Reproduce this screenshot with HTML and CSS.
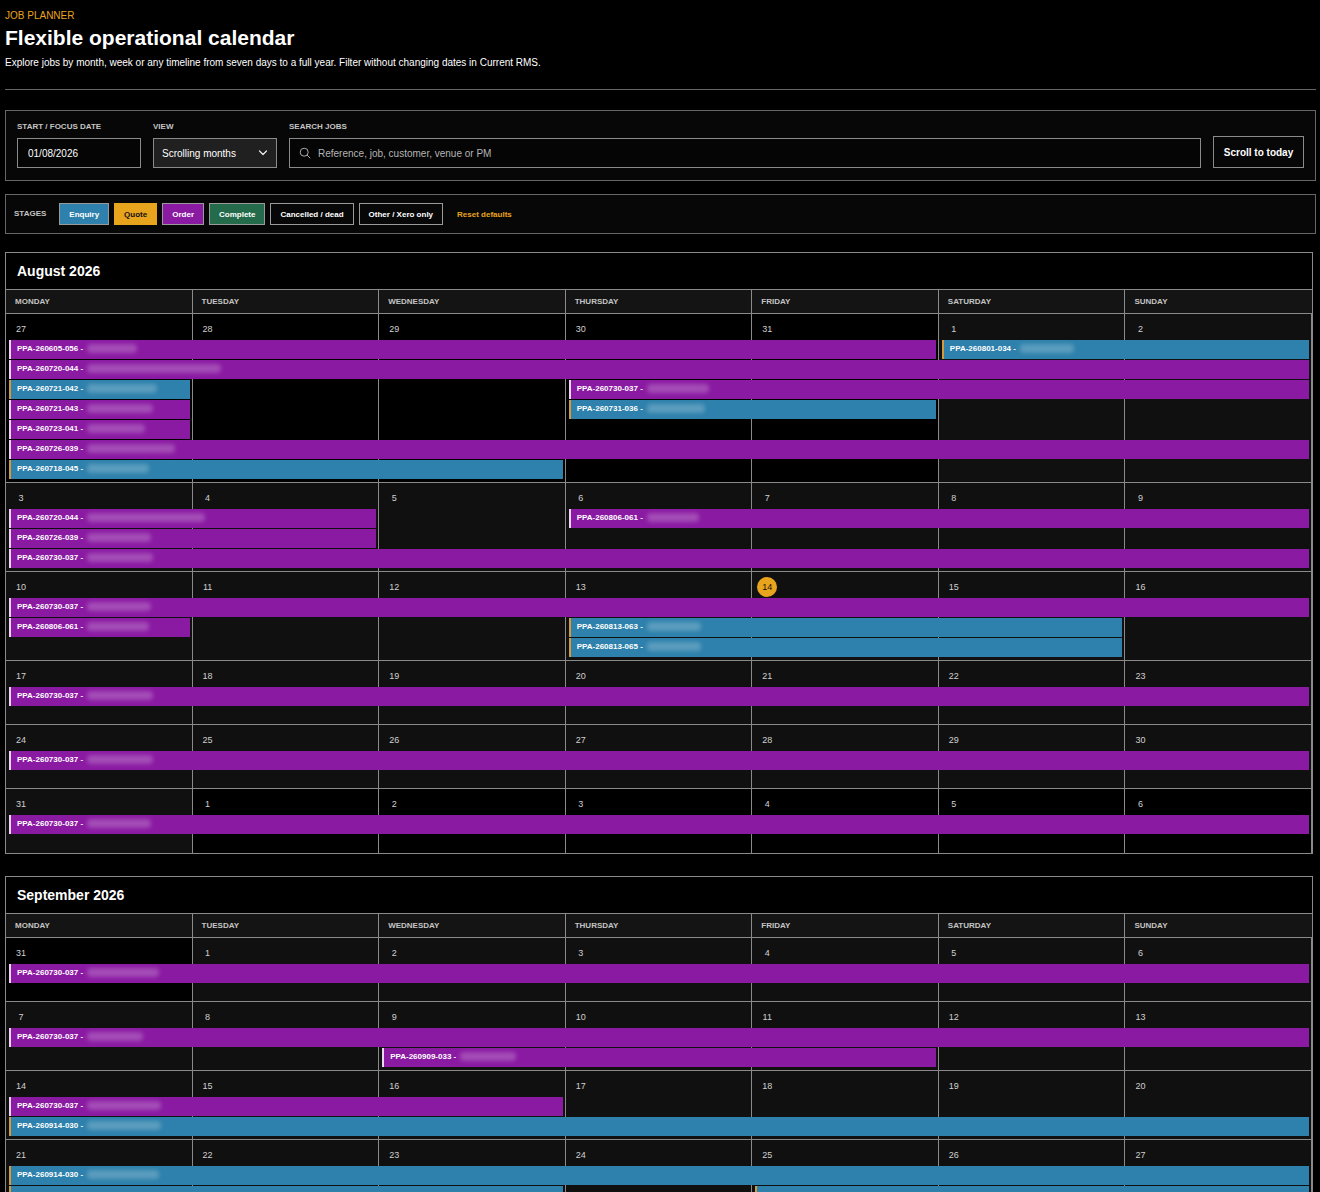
FILE: index.html
```
<!DOCTYPE html>
<html lang="en-GB">
<head>
    <meta charset="UTF-8">
    <meta name="viewport" content="width=device-width, initial-scale=1.0">
    <title>Job Planner</title>
    <link rel="stylesheet" href="styles.css">
</head>
<body>
    <header class="page-header">
        <p class="eyebrow">JOB PLANNER</p>
        <h1>Flexible operational calendar</h1>
        <p class="intro">Explore jobs by month, week or any timeline from seven days to a full year. Filter without changing dates in Current RMS.</p>
    </header>

    <!-- Date, view and search -->
    <form class="panel controls">
        <div class="field">
            <label for="focus-date">START / FOCUS DATE</label>
            <input class="control" type="text" id="focus-date" value="01/08/2026">
        </div>
        <div class="field">
            <label for="view">VIEW</label>
            <div class="select-wrap">
                <select class="control" id="view">
                    <option>Scrolling months</option>
                </select>
                <svg class="chevron" width="10" height="6" viewBox="0 0 10 6" aria-hidden="true">
                    <path d="M1.5 1 L5 4.5 L8.5 1" fill="none" stroke="#eee" stroke-width="1.2" stroke-linecap="round" stroke-linejoin="round"/>
                </svg>
            </div>
        </div>
        <div class="field">
            <label for="search">SEARCH JOBS</label>
            <div class="control search-box">
                <svg width="12" height="12" viewBox="0 0 12 12" aria-hidden="true">
                    <circle cx="5.2" cy="5.2" r="4" fill="none" stroke="#aaa" stroke-width="1"/>
                    <path d="M8.2 8.2 L11 11" stroke="#aaa" stroke-width="1" stroke-linecap="round"/>
                </svg>
                <input type="text" id="search" placeholder="Reference, job, customer, venue or PM">
            </div>
        </div>
        <button type="button" class="today-button">Scroll to today</button>
    </form>

    <!-- Stage filters -->
    <div class="panel stages">
        <span class="stages-label">STAGES</span>
        <button type="button" class="stage enquiry">Enquiry</button>
        <button type="button" class="stage quote">Quote</button>
        <button type="button" class="stage order">Order</button>
        <button type="button" class="stage complete">Complete</button>
        <button type="button" class="stage">Cancelled / dead</button>
        <button type="button" class="stage">Other / Xero only</button>
        <button type="button" class="reset">Reset defaults</button>
    </div>

    <main id="calendar"></main>

    <script>
        const dayNames = ['MONDAY', 'TUESDAY', 'WEDNESDAY', 'THURSDAY', 'FRIDAY', 'SATURDAY', 'SUNDAY'];

        // job: [stage, reference, first day column, last day column, lane, width of the hidden name]
        const months = [
            {
                title: 'August 2026',
                weeks: [
                    { days: [27, 28, 29, 30, 31, 1, 2], outside: [0, 1, 2, 3, 4], lanes: 7, jobs: [
                        ['order', 'PPA-260605-056', 1, 5, 1, 50],
                        ['enquiry', 'PPA-260801-034', 6, 7, 1, 54],
                        ['order', 'PPA-260720-044', 1, 7, 2, 134],
                        ['enquiry', 'PPA-260721-042', 1, 1, 3, 70],
                        ['order', 'PPA-260730-037', 4, 7, 3, 62],
                        ['order', 'PPA-260721-043', 1, 1, 4, 66],
                        ['enquiry', 'PPA-260731-036', 4, 5, 4, 58],
                        ['order', 'PPA-260723-041', 1, 1, 5, 58],
                        ['order', 'PPA-260726-039', 1, 7, 6, 88],
                        ['enquiry', 'PPA-260718-045', 1, 3, 7, 62]
                    ] },
                    { days: [3, 4, 5, 6, 7, 8, 9], outside: [], lanes: 3, jobs: [
                        ['order', 'PPA-260720-044', 1, 2, 1, 118],
                        ['order', 'PPA-260806-061', 4, 7, 1, 52],
                        ['order', 'PPA-260726-039', 1, 2, 2, 64],
                        ['order', 'PPA-260730-037', 1, 7, 3, 66]
                    ] },
                    { days: [10, 11, 12, 13, 14, 15, 16], outside: [], lanes: 3, today: 14, jobs: [
                        ['order', 'PPA-260730-037', 1, 7, 1, 64],
                        ['order', 'PPA-260806-061', 1, 1, 2, 62],
                        ['enquiry', 'PPA-260813-063', 4, 6, 2, 54],
                        ['enquiry', 'PPA-260813-065', 4, 6, 3, 54]
                    ] },
                    { days: [17, 18, 19, 20, 21, 22, 23], outside: [], lanes: 1, jobs: [
                        ['order', 'PPA-260730-037', 1, 7, 1, 66]
                    ] },
                    { days: [24, 25, 26, 27, 28, 29, 30], outside: [], lanes: 1, jobs: [
                        ['order', 'PPA-260730-037', 1, 7, 1, 66]
                    ] },
                    { days: [31, 1, 2, 3, 4, 5, 6], outside: [1, 2, 3, 4, 5, 6], lanes: 1, jobs: [
                        ['order', 'PPA-260730-037', 1, 7, 1, 64]
                    ] }
                ]
            },
            {
                title: 'September 2026',
                weeks: [
                    { days: [31, 1, 2, 3, 4, 5, 6], outside: [0], lanes: 1, jobs: [
                        ['order', 'PPA-260730-037', 1, 7, 1, 72]
                    ] },
                    { days: [7, 8, 9, 10, 11, 12, 13], outside: [], lanes: 2, jobs: [
                        ['order', 'PPA-260730-037', 1, 7, 1, 56],
                        ['order', 'PPA-260909-033', 3, 5, 2, 56]
                    ] },
                    { days: [14, 15, 16, 17, 18, 19, 20], outside: [], lanes: 2, jobs: [
                        ['order', 'PPA-260730-037', 1, 3, 1, 74],
                        ['enquiry', 'PPA-260914-030', 1, 7, 2, 74]
                    ] },
                    { days: [21, 22, 23, 24, 25, 26, 27], outside: [], lanes: 2, jobs: [
                        ['enquiry', 'PPA-260914-030', 1, 7, 1, 72],
                        ['enquiry', '', 1, 3, 2, 0],
                        ['enquiry', '', 5, 7, 2, 0]
                    ] }
                ]
            }
        ];

        function renderDay(week, day, index) {
            const outside = week.outside.includes(index) ? ' outside' : '';
            const today = week.today === day ? ' today' : '';
            return `<div class="day${outside}" style="grid-column: ${index + 1}"><span class="day-number${today}">${day}</span></div>`;
        }

        function renderJob([stage, ref, first, last, lane, width]) {
            const label = ref ? `${ref} - <span class="hidden-name" style="width: ${width}px"></span>` : '';
            return `<div class="job ${stage}" style="grid-column: ${first} / ${last + 1}; grid-row: ${lane + 1}">${label}</div>`;
        }

        function renderWeek(week) {
            return `
                <div class="week" style="grid-template-rows: 26px repeat(${week.lanes}, 20px) minmax(2px, 1fr)">
                    ${week.days.map((day, index) => renderDay(week, day, index)).join('')}
                    ${week.jobs.map(renderJob).join('')}
                </div>
            `;
        }

        document.getElementById('calendar').innerHTML = months.map(month => `
            <section class="month">
                <h2>${month.title}</h2>
                <div class="weekdays">${dayNames.map(name => `<div>${name}</div>`).join('')}</div>
                ${month.weeks.map(renderWeek).join('')}
            </section>
        `).join('');
    </script>
</body>
</html>
```
FILE: styles.css
```
* {
    box-sizing: border-box;
}
body {
    height: 100vh;
    margin: 0;
    padding: 10px 4px 0 5px;
    overflow: hidden auto;
    scrollbar-width: none;
    background-color: #000;
    color: #fff;
    font-family: Helvetica, "Liberation Sans", Arial, sans-serif;
    font-size: 10px;
}
h1, h2, p {
    margin: 0;
}
button, input, select {
    font-family: inherit;
    font-size: 10px;
    color: #fff;
}
.page-header {
    margin-bottom: 20px;
    padding-bottom: 19px;
    border-bottom: 1px solid #666;
}
.eyebrow {
    line-height: 12px;
    color: #e9a41e;
}
h1 {
    margin: 3px 0 5px;
    font-size: 21px;
    line-height: 26px;
}
.intro {
    line-height: 14px;
}
.panel {
    border: 1px solid #666;
    background-color: #070707;
}
.controls {
    display: grid;
    grid-template-columns: 124px 124px 1fr 91px;
    gap: 12px;
    align-items: end;
    margin-bottom: 13px;
    padding: 11px 11px 12px;
}
.field {
    display: flex;
    flex-direction: column;
    gap: 6px;
}
.field label, .stages-label {
    font-size: 8px;
    font-weight: bold;
    line-height: 10px;
    color: #c4c4c4;
}
.control {
    width: 100%;
    height: 30px;
    padding: 0 10px;
    border: 1px solid #8a8a8a;
    border-radius: 0;
    background-color: #050505;
}
.select-wrap {
    position: relative;
}
.select-wrap select {
    display: block;
    padding: 0 8px;
    appearance: none;
    background-color: #202020;
}
.chevron {
    position: absolute;
    top: 12px;
    right: 9px;
    pointer-events: none;
}
.search-box {
    display: flex;
    align-items: center;
    gap: 7px;
    padding: 0 9px;
}
.search-box input {
    flex: 1;
    padding: 0;
    border: 0;
    outline: 0;
    background: none;
}
.search-box input::placeholder {
    color: #b4b4b4;
}
.today-button {
    height: 32px;
    padding: 0;
    border: 1px solid #8a8a8a;
    background-color: #070707;
    font-weight: bold;
}
.stages {
    display: flex;
    align-items: center;
    gap: 5px;
    margin-bottom: 18px;
    padding: 8px;
}
.stages-label {
    margin-right: 8px;
}
.stage {
    height: 22px;
    padding: 0 9px;
    border: 1px solid #9a9a9a;
    background-color: #070707;
    font-size: 8px;
    font-weight: bold;
}
.stage.quote {
    border-color: #e9a41e;
    background-color: #e9a41e;
    color: #111;
}
.stage.complete {
    background-color: #236b4a;
}
.enquiry, .stage.enquiry {
    background-color: #2d81ac;
}
.order, .stage.order {
    background-color: #8a1aa2;
}
.reset {
    padding: 0 9px;
    border: 0;
    background: none;
    font-size: 8px;
    font-weight: bold;
    color: #e9a41e;
}
.month {
    margin: 0 3px 22px 0;
    border: 1px solid #8a8a8a;
}
.month h2 {
    padding: 0 11px;
    border-bottom: 1px solid #8a8a8a;
    font-size: 14px;
    line-height: 36px;
}
.weekdays, .week {
    display: grid;
    grid-template-columns: repeat(7, 1fr);
    border-bottom: 1px solid #8a8a8a;
}
.weekdays {
    background-color: #141414;
    font-size: 8px;
    font-weight: bold;
    line-height: 23px;
    color: #c4c4c4;
}
.weekdays div {
    padding-left: 9px;
    border-right: 1px solid #8a8a8a;
}
.weekdays div:last-child {
    border-right: 0;
}
.week {
    min-height: 64px;
}
.week:last-child {
    border-bottom: 0;
}
.day {
    grid-row: 1 / -1;
    padding: 5px;
    border-right: 1px solid #8a8a8a;
    background-color: #101010;
}
.day.outside {
    background-color: #000;
}
.day-number {
    display: block;
    width: 20px;
    border-radius: 50%;
    font-size: 9px;
    line-height: 20px;
    text-align: center;
    color: #d0d0d0;
}
.day-number.today {
    background-color: #e9a41e;
    color: #111;
}
.job {
    display: flex;
    align-items: center;
    height: 19px;
    margin: 0 3px;
    padding: 0 6px 2px;
    border-left: 2px solid #e9d9ee;
    overflow: hidden;
    font-size: 8px;
    font-weight: bold;
    white-space: pre;
}
.job.enquiry {
    border-left-color: #d39a3a;
}
/* client name, kept unreadable */
.hidden-name {
    height: 9px;
    margin-left: 2px;
    border-radius: 4px;
    background-color: rgba(255, 255, 255, 0.22);
    filter: blur(2px);
}
```
